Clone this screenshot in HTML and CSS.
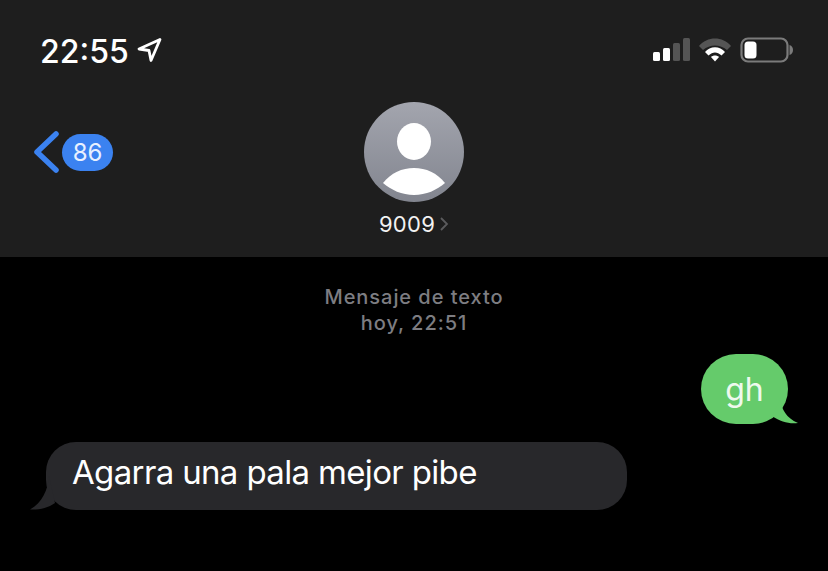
FILE: index.html
```html
<!DOCTYPE html>
<html lang="es">
<head>
<meta charset="utf-8">
<title>Mensajes</title>
<link rel="stylesheet" href="styles.css">
</head>
<body>
<div class="screen">
  <header class="header">
    <div class="status">
      <div class="clock">
        <span class="time">22:55</span>
        <svg class="arrow" width="28" height="28" viewBox="0 0 28 28"><path d="M25 3.500 4 13l10 1.500 2 10z" fill="none" stroke="#fff" stroke-width="2.800" stroke-linejoin="round"/></svg>
      </div>
      <div class="indicators">
        <svg width="38" height="24" viewBox="0 0 38 24"><rect x="1" y="14" width="7" height="9" rx="1.500" fill="#fff"/><rect x="11" y="10" width="7" height="13" rx="1.500" fill="#fff"/><rect x="21" y="5" width="7" height="18" rx="1.500" fill="#555"/><rect x="31" y="0" width="7" height="23" rx="1.500" fill="#555"/></svg>
        <svg width="32" height="24" viewBox="0 0 32 24"><path d="M0 8C8-2 24-2 32 8l-4 4C21 6 11 6 4 12z" fill="#555"/><path d="M6 14c5-6.500 15-6.500 20 0l-3.500 3.500c-4.500-4-8.500-4-13 0z" fill="#fff"/><path d="M12 19c2-2 6-2 8 0l-4 4.500z" fill="#fff"/></svg>
        <svg width="54" height="26" viewBox="0 0 54 26"><rect x="1.500" y="1.500" width="46" height="23" rx="6.500" fill="none" stroke="#7b7b7b" stroke-width="2.200"/><rect x="4.500" y="4.500" width="12" height="17" rx="3.500" fill="#fff"/><path d="M49.500 8c2.500.8 3.500 2.800 3.500 5s-1 4.200-3.500 5z" fill="#7b7b7b"/></svg>
      </div>
    </div>
    <div class="nav">
      <div class="back">
        <svg width="28" height="42" viewBox="0 0 28 42"><path d="M22 3 3 21l19 18" fill="none" stroke="#3b82f0" stroke-width="5.500" stroke-linecap="round" stroke-linejoin="round"/></svg>
        <span class="badge">86</span>
      </div>
      <div class="contact">
        <svg class="avatar" width="100" height="100" viewBox="0 0 100 100">
          <defs><linearGradient id="av" x1="0" y1="0" x2="0" y2="1"><stop offset="0" stop-color="#a3a5ae"/><stop offset="1" stop-color="#82858f"/></linearGradient></defs>
          <circle cx="50" cy="50" r="50" fill="url(#av)"/>
          <ellipse cx="50" cy="39.500" rx="17" ry="18.500" fill="#fff"/>
          <path d="M19 81C27 71 38 66 50 66s23 5 31 15c-8 7-19 12-31 12S27 88 19 81z" fill="#fff"/>
        </svg>
        <div class="name">
          <span>9009</span>
          <svg width="10" height="16" viewBox="0 0 10 16"><path d="m2 2 6 6-6 6" fill="none" stroke="#5b5b5d" stroke-width="1.800"/></svg>
        </div>
      </div>
    </div>
  </header>
  <main class="thread">
    <div class="meta">
      <div>Mensaje de texto</div>
      <div>hoy, 22:51</div>
    </div>
    <div class="bubble sent"><span class="text">gh</span>
      <svg class="tail tail-sent" width="30" height="24" viewBox="0 0 30 24"><path d="M10 0c2 9 6 18 18 23C19 24 11 22 2 16z" fill="#65cb6b"/></svg>
    </div>
    <div class="bubble received"><span class="text">Agarra una pala mejor pibe</span>
      <svg class="tail tail-received" width="30" height="34" viewBox="0 0 30 34"><path d="M21 0C20 14 14 27 2 33.500 11 34 20 32 27 27z" fill="#28282b"/></svg>
    </div>
  </main>
</div>
</body>
</html>
```
FILE: styles.css
```css
* { box-sizing: border-box; }
html, body { margin: 0; padding: 0; background: #000; }
body { font-family: Inter, "Liberation Sans", sans-serif; color: #fff; }
.screen { width: 828px; height: 571px; overflow: hidden; display: flex; flex-direction: column; }
.header { height: 257px; background: #1e1e1e; padding: 32px 34px 0 34px; }
.status { display: flex; justify-content: space-between; align-items: center; height: 36px; }
.clock { display: flex; align-items: center; gap: 6px; padding-left: 6px; }
.time { font-size: 32px; font-weight: 500; line-height: 36px; margin-top: 3px; }
.indicators { display: flex; align-items: center; gap: 9px; }
.nav { position: relative; display: flex; justify-content: center; padding-top: 34px; }
.back { position: absolute; left: 0; top: 63px; display: flex; align-items: center; gap: 0; }
.badge { background: #3b82f0; border-radius: 19px; width: 51px; height: 37px; display: flex; align-items: center; justify-content: center; font-size: 24px; font-weight: 400; color: #e8f0ff; }
.contact { display: flex; flex-direction: column; align-items: center; }
.avatar { display: block; }
.name { display: flex; align-items: center; gap: 4px; margin-top: 8px; font-size: 22px; line-height: 28px; padding-left: 0; letter-spacing: 0.3px; color: #f2f2f2; }
.thread { flex: 1; display: flex; flex-direction: column; padding: 27px 40px 0 46px; }
.meta { text-align: center; font-size: 20px; line-height: 26px; font-weight: 500; color: #7d7d82; margin-left: -6px; letter-spacing: 0.95px; }
.bubble { position: relative; display: flex; align-items: center; }
.sent { align-self: flex-end; width: 87px; height: 70px; margin-top: 18px; background: #65cb6b; border-radius: 35px; justify-content: center; color: #eef9ee; font-size: 32px; }
.sent .text { margin-bottom: 0; }
.received { width: 581px; height: 68px; margin-top: 18px; background: #28282b; border-radius: 30px; padding-left: 26px; font-size: 33px; letter-spacing: -0.65px; }
.received .text { margin-bottom: 9px; }
.tail { position: absolute; bottom: 0; }
.tail-sent { right: -12px; }
.tail-received { left: -18px; }
```
